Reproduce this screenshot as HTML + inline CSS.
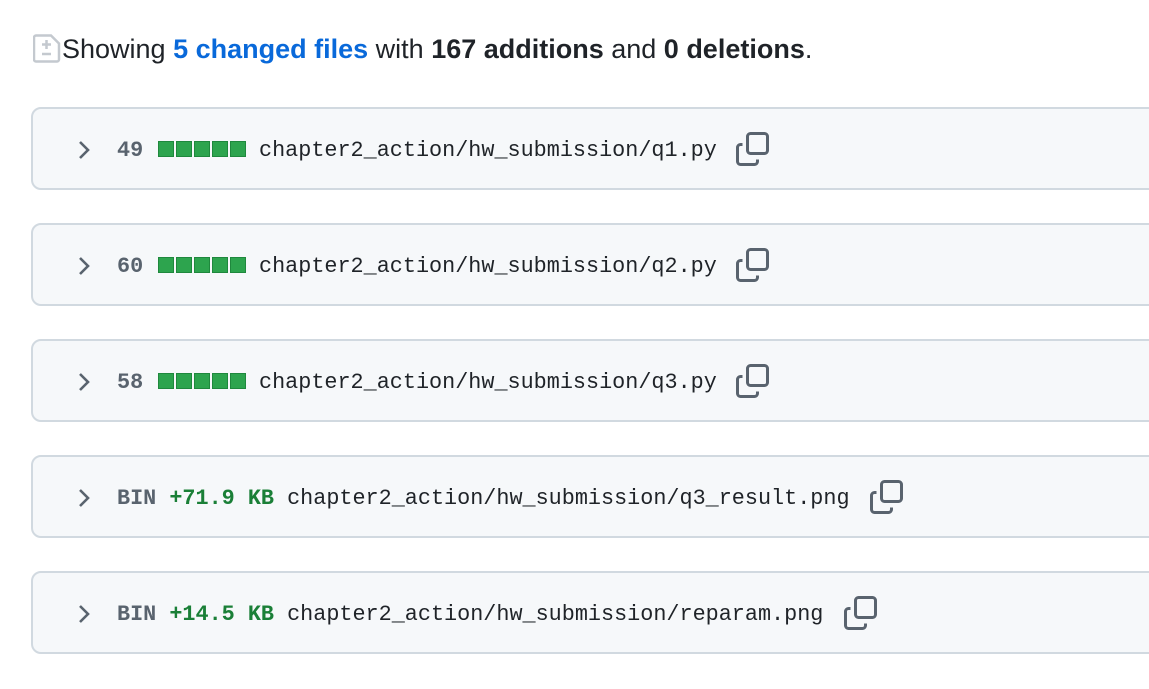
<!DOCTYPE html>
<html><head><meta charset="utf-8"><style>
body{margin:0;width:1149px;height:689px;background:#fff;overflow:hidden;position:relative;font-family:"Liberation Sans",sans-serif;}
.hdr{position:absolute;left:62px;top:34px;font-size:27px;color:#1f2328;white-space:pre;}
.hdr a{color:#0969da;font-weight:bold;text-decoration:none}
.hdr b{font-weight:bold}
.row{position:absolute;left:31px;width:1140px;height:83px;border:2px solid #d1d9e0;border-radius:10px;background:#f6f8fa;box-sizing:border-box;}
.t{position:absolute;top:29px;font-family:"Liberation Mono",monospace;font-size:21.8px;line-height:26px;color:#1f2328;white-space:pre;}
.chev{position:absolute;left:44px;top:31px}
.n{color:#59636e;font-weight:bold}
.g{color:#1a7f37;font-weight:bold}
.sqs{position:absolute;top:32px;left:125px;height:16px;white-space:nowrap;font-size:0}
.sq{display:inline-block;width:16px;height:16px;background:#2da44e;border:1px solid #1f883d;box-sizing:border-box;margin-right:2px}
</style></head><body>
<svg style="position:absolute;left:33px;top:34px" width="28" height="29" viewBox="0 0 28 29"><path d="M3 1.5h15l8 8v16a2 2 0 0 1-2 2H3a2 2 0 0 1-2-2v-22a2 2 0 0 1 2-2z" fill="none" stroke="#c4c9cf" stroke-width="2.5"/><path d="M13.5 6v9M9 10.5h9M9 20h9" stroke="#c4c9cf" stroke-width="2.5"/></svg>
<div class="hdr">Showing <a>5 changed files</a> with <b>167 additions</b> and <b>0 deletions</b>.</div>

<div class="row" style="top:107px"><svg class="chev" width="14" height="20"><path d="M3 2l8 8-8 8" fill="none" stroke="#59636e" stroke-width="2.6"/></svg><div class="t n" style="left:84px">49</div><div class="sqs"><span class="sq"></span><span class="sq"></span><span class="sq"></span><span class="sq"></span><span class="sq"></span></div><div class="t" style="left:226px">chapter2_action/hw_submission/q1.py</div><svg style="position:absolute;left:703px;top:23px" width="34" height="34" viewBox="0 0 34 34"><rect x="11.5" y="1.5" width="20" height="20" rx="3" fill="none" stroke="#59636e" stroke-width="3"/><path d="M6.5 12.5h-2a3 3 0 0 0-3 3v14a3 3 0 0 0 3 3h14a3 3 0 0 0 3-3v-2" fill="none" stroke="#59636e" stroke-width="3"/></svg></div>

<div class="row" style="top:223px"><svg class="chev" width="14" height="20"><path d="M3 2l8 8-8 8" fill="none" stroke="#59636e" stroke-width="2.6"/></svg><div class="t n" style="left:84px">60</div><div class="sqs"><span class="sq"></span><span class="sq"></span><span class="sq"></span><span class="sq"></span><span class="sq"></span></div><div class="t" style="left:226px">chapter2_action/hw_submission/q2.py</div><svg style="position:absolute;left:703px;top:23px" width="34" height="34" viewBox="0 0 34 34"><rect x="11.5" y="1.5" width="20" height="20" rx="3" fill="none" stroke="#59636e" stroke-width="3"/><path d="M6.5 12.5h-2a3 3 0 0 0-3 3v14a3 3 0 0 0 3 3h14a3 3 0 0 0 3-3v-2" fill="none" stroke="#59636e" stroke-width="3"/></svg></div>

<div class="row" style="top:339px"><svg class="chev" width="14" height="20"><path d="M3 2l8 8-8 8" fill="none" stroke="#59636e" stroke-width="2.6"/></svg><div class="t n" style="left:84px">58</div><div class="sqs"><span class="sq"></span><span class="sq"></span><span class="sq"></span><span class="sq"></span><span class="sq"></span></div><div class="t" style="left:226px">chapter2_action/hw_submission/q3.py</div><svg style="position:absolute;left:703px;top:23px" width="34" height="34" viewBox="0 0 34 34"><rect x="11.5" y="1.5" width="20" height="20" rx="3" fill="none" stroke="#59636e" stroke-width="3"/><path d="M6.5 12.5h-2a3 3 0 0 0-3 3v14a3 3 0 0 0 3 3h14a3 3 0 0 0 3-3v-2" fill="none" stroke="#59636e" stroke-width="3"/></svg></div>

<div class="row" style="top:455px"><svg class="chev" width="14" height="20"><path d="M3 2l8 8-8 8" fill="none" stroke="#59636e" stroke-width="2.6"/></svg><div class="t" style="left:84px"><span class="n">BIN</span> <span class="g">+71.9 KB</span> chapter2_action/hw_submission/q3_result.png</div><svg style="position:absolute;left:837px;top:23px" width="34" height="34" viewBox="0 0 34 34"><rect x="11.5" y="1.5" width="20" height="20" rx="3" fill="none" stroke="#59636e" stroke-width="3"/><path d="M6.5 12.5h-2a3 3 0 0 0-3 3v14a3 3 0 0 0 3 3h14a3 3 0 0 0 3-3v-2" fill="none" stroke="#59636e" stroke-width="3"/></svg></div>

<div class="row" style="top:571px"><svg class="chev" width="14" height="20"><path d="M3 2l8 8-8 8" fill="none" stroke="#59636e" stroke-width="2.6"/></svg><div class="t" style="left:84px"><span class="n">BIN</span> <span class="g">+14.5 KB</span> chapter2_action/hw_submission/reparam.png</div><svg style="position:absolute;left:811px;top:23px" width="34" height="34" viewBox="0 0 34 34"><rect x="11.5" y="1.5" width="20" height="20" rx="3" fill="none" stroke="#59636e" stroke-width="3"/><path d="M6.5 12.5h-2a3 3 0 0 0-3 3v14a3 3 0 0 0 3 3h14a3 3 0 0 0 3-3v-2" fill="none" stroke="#59636e" stroke-width="3"/></svg></div>
</body></html>
